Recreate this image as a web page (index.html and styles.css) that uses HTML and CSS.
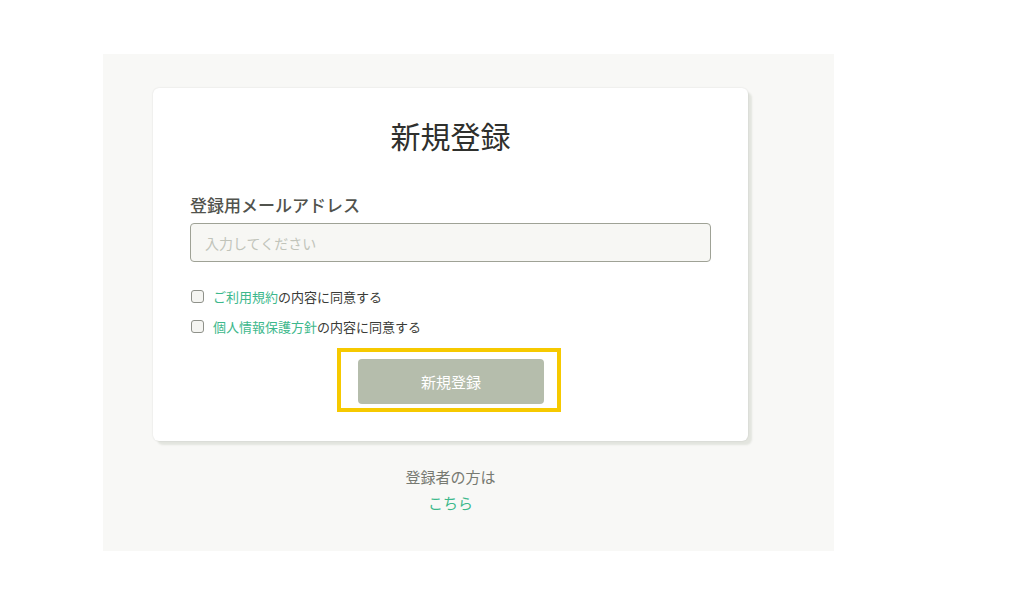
FILE: index.html
```html
<!DOCTYPE html>
<html lang="ja">
<head>
  <meta charset="UTF-8" />
  <meta name="viewport" content="width=device-width, initial-scale=1.0"/>
  <title>新規登録</title>
  <link rel="stylesheet" href="styles.css">
</head>
<body>
  <div class="panel">
    <div class="column">
      <div class="card">
        <h1>新規登録</h1>
        <form id="signupForm">
          <label class="field-label" for="email">登録用メールアドレス</label>
          <input type="email" id="email" class="text-input" placeholder="入力してください" />

          <label class="check-row">
            <input type="checkbox" id="terms" />
            <span><a href="#">ご利用規約</a>の内容に同意する</span>
          </label>
          <label class="check-row">
            <input type="checkbox" id="privacy" />
            <span><a href="#">個人情報保護方針</a>の内容に同意する</span>
          </label>

          <div class="highlight">
            <button type="submit" class="submit-btn">新規登録</button>
          </div>
        </form>
      </div>
      <div class="footer-note">
        <p>登録者の方は</p>
        <a href="#">こちら</a>
      </div>
    </div>
  </div>
</body>
</html>
```

FILE: styles.css
```css
body {
  font-family: "Noto Sans CJK JP", "Noto Sans", sans-serif;
  background-color: #ffffff;
  margin: 0;
  padding: 0;
}
.panel {
  background-color: #f8f8f6;
  width: 681px;
  height: 463px;
  margin: 54px 0 0 103px;
  padding: 34px 0 0 50px;
}
.column {
  width: 595px;
}
.card {
  background-color: #fff;
  height: 326px;
  padding: 27px 37px 0;
  border-radius: 6px;
  box-shadow: 0 0 2px rgba(0, 0, 0, 0.12), 4px 4px 2px #e3e5df;
}
.card h1 {
  margin: 0;
  text-align: center;
  font-size: 30px;
  line-height: 40px;
  font-weight: 400;
  color: #2f302d;
}
.field-label {
  display: block;
  margin-top: 38px;
  font-size: 17px;
  line-height: 24px;
  font-weight: 500;
  color: #51534d;
}
.text-input {
  display: block;
  box-sizing: border-box;
  width: 521px;
  height: 39px;
  margin-top: 6px;
  padding: 0 14px;
  background-color: #f7f7f4;
  border: 1px solid #9fa296;
  border-radius: 4px;
  font-family: inherit;
  font-size: 14px;
  color: #333;
}
.text-input::placeholder {
  color: #c1c4ba;
}
.check-row {
  display: flex;
  align-items: center;
  gap: 9px;
  height: 22px;
  margin-top: 8px;
  padding-left: 1px;
  font-size: 13px;
  color: #3a3b37;
}
.text-input + .check-row {
  margin-top: 23px;
}
.check-row input {
  appearance: none;
  width: 13px;
  height: 13px;
  margin: 0;
  border: 1px solid #8f918a;
  border-radius: 3px;
  background-color: #f5f5f2;
}
.check-row a {
  color: #3db88c;
  text-decoration: none;
}
.highlight {
  width: 186px;
  margin: 11px 0 0 147px;
  padding: 7px 13px 4px 17px;
  border: 4px solid #f6c900;
}
.submit-btn {
  display: block;
  width: 186px;
  height: 45px;
  background-color: #b5bdac;
  color: #fff;
  border: none;
  border-radius: 4px;
  font-family: inherit;
  font-size: 15px;
}
.footer-note {
  margin-top: 23px;
  text-align: center;
  font-size: 15px;
  line-height: 26px;
  color: #777a72;
}
.footer-note p {
  margin: 0;
}
.footer-note a {
  color: #3db88c;
  text-decoration: none;
}
```
